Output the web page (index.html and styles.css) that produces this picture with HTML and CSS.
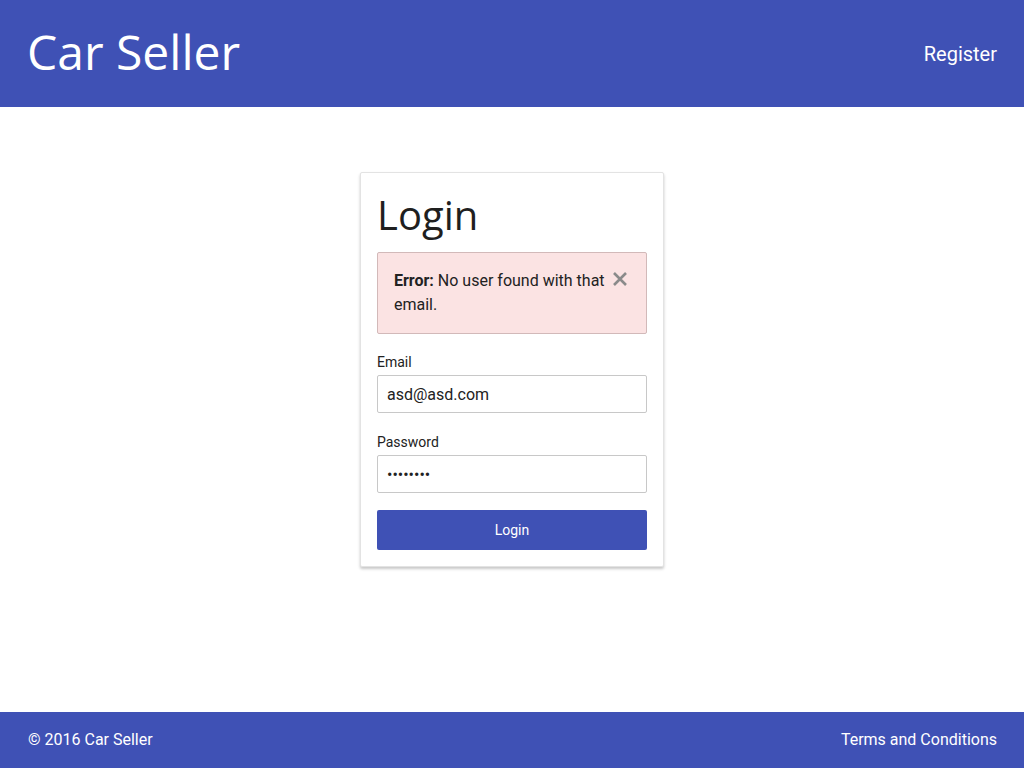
FILE: index.html
```html
<!DOCTYPE html>
<html lang="en">
<head>
<meta charset="utf-8">
<title>Car Seller - Login</title>
<link rel="stylesheet" href="styles.css">
</head>
<body>
<div class="page">
  <header class="topbar">
    <div class="brand">Car Seller</div>
    <a class="nav-link" href="#">Register</a>
  </header>
  <main class="main">
    <section class="card">
      <h1 class="card-title">Login</h1>
      <div class="alert">
        <p class="alert-text"><strong>Error:</strong> No user found with that email.</p>
        <button class="alert-close" type="button" aria-label="Close">
          <svg width="16" height="16" viewBox="0 0 16 16"><path d="M2 2 L14 14 M14 2 L2 14" stroke="#8a8a8a" stroke-width="2.6" fill="none"/></svg>
        </button>
      </div>
      <form class="form">
        <label class="field">
          <span class="field-label">Email</span>
          <input class="field-input" type="text" value="asd@asd.com">
        </label>
        <label class="field">
          <span class="field-label">Password</span>
          <input class="field-input" type="password" value="asdasdas">
        </label>
        <button class="btn" type="button">Login</button>
      </form>
    </section>
  </main>
  <footer class="footer">
    <span class="footer-text">© 2016 Car Seller</span>
    <a class="footer-link" href="#">Terms and Conditions</a>
  </footer>
</div>
</body>
</html>
```
FILE: styles.css
```css
* { box-sizing: border-box; }
html, body { margin: 0; padding: 0; }
body {
  font-family: Roboto, "Liberation Sans", sans-serif;
  color: #212121;
  background: #fff;
}
.page {
  min-height: 100vh;
  display: flex;
  flex-direction: column;
}
.topbar {
  height: 107px;
  background: #3f51b5;
  color: #fff;
  display: flex;
  align-items: center;
  justify-content: space-between;
  padding: 0 27px 0 27px;
}
.brand {
  font-family: "Open Sans", sans-serif;
  font-size: 48px;
  line-height: 1;
  margin-top: -3px;
}
.nav-link {
  color: #fff;
  text-decoration: none;
  font-size: 20px;
}
.main {
  flex: 1;
  display: flex;
  justify-content: center;
  align-items: flex-start;
  padding-top: 65px;
}
.card {
  width: 304px;
  border: 1px solid #e3e3e3;
  border-radius: 2px;
  box-shadow: 0 2px 3px rgba(0,0,0,0.22);
  padding: 16px;
  background: #fff;
}
.card-title {
  font-family: "Open Sans", sans-serif;
  font-weight: 400;
  font-size: 40px;
  line-height: 48px;
  padding-top: 2px;
  margin: 0 0 13px;
  color: #1f1f1f;
}
.alert {
  background: #fbe3e3;
  border: 1px solid #d2b9b9;
  border-radius: 2px;
  padding: 16px 18px 16px 16px;
  display: flex;
  gap: 6px;
  align-items: flex-start;
}
.alert-text {
  margin: 0;
  flex: 1;
  font-size: 16px;
  line-height: 24px;
  color: #222;
}
.alert-text strong { font-weight: 700; }
.alert-close {
  border: none;
  background: none;
  padding: 0;
  width: 16px;
  height: 16px;
  margin-top: 2px;
  cursor: pointer;
  display: flex;
  flex: none;
}
.form {
  display: flex;
  flex-direction: column;
  margin-top: 18px;
}
.field {
  display: flex;
  flex-direction: column;
  margin-bottom: 19px;
}
.field:last-of-type { margin-bottom: 17px; }
.field-label {
  font-size: 14px;
  line-height: 20px;
  margin-bottom: 3px;
  color: #222;
}
.field-input {
  height: 38px;
  border: 1px solid #c8c8c8;
  border-radius: 2px;
  padding: 0 9px;
  font-family: Roboto, "Liberation Sans", sans-serif;
  font-size: 16px;
  color: #222;
  outline: none;
}
.btn {
  height: 40px;
  background: #3f51b5;
  color: #fff;
  border: none;
  border-radius: 2px;
  font-family: Roboto, "Liberation Sans", sans-serif;
  font-size: 14px;
  cursor: pointer;
}
.footer {
  height: 56px;
  background: #3f51b5;
  color: #fff;
  display: flex;
  align-items: center;
  justify-content: space-between;
  padding: 0 27px 1px 28px;
  font-size: 16px;
}
.footer-link {
  color: #fff;
  text-decoration: none;
}
```
